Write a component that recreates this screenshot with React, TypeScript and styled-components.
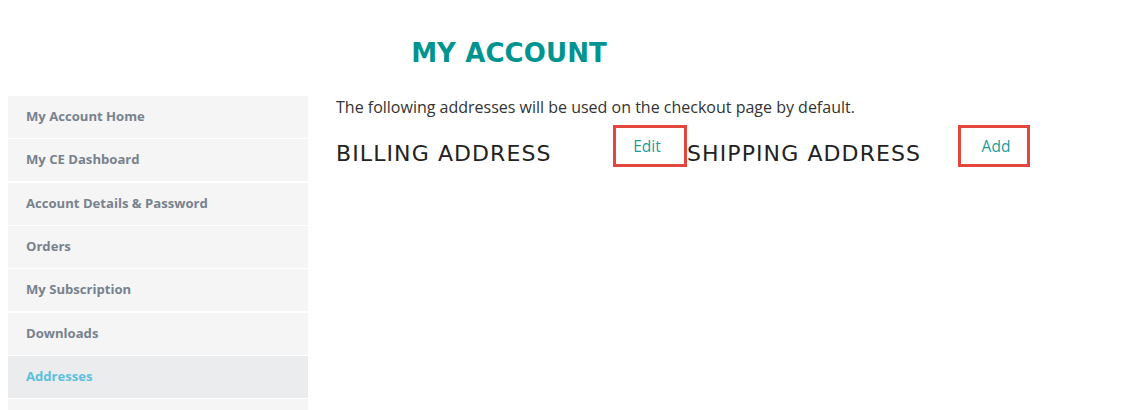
import React from "react";
import styled, { createGlobalStyle } from "styled-components";

const GlobalStyle = createGlobalStyle`
  html, body { margin: 0; padding: 0; background: #fff; }
  body { font-family: "Open Sans", "Liberation Sans", sans-serif; }
  * { box-sizing: border-box; }
`;

const Page = styled.div`
  padding: 0 8px;
  width: 1132px;
  height: 410px;
  overflow: hidden;
`;

const Title = styled.h1`
  margin: 0;
  width: 1002px;
  padding-top: 35px;
  height: 96px;
  text-align: center;
  font-family: "DejaVu Sans", "Liberation Sans", sans-serif;
  font-weight: 600;
  font-size: 26px;
  line-height: 36px;
  color: #009490;
  letter-spacing: 0.1px;
`;

const Layout = styled.div`
  display: flex;
  gap: 28px;
  align-items: flex-start;
`;

const Sidebar = styled.nav`
  width: 300px;
  display: flex;
  flex-direction: column;
  gap: 1.33px;
`;

const NavItem = styled.a<{ $active?: boolean }>`
  display: flex;
  align-items: center;
  height: 42px;
  padding-left: 18px;
  padding-bottom: 2px;
  background: ${(p) => (p.$active ? "#ebecee" : "#f5f5f5")};
  color: ${(p) => (p.$active ? "#5bc0de" : "#77828e")};
  font-family: "Open Sans", sans-serif;
  font-weight: 700;
  font-size: 13.1px;
  text-decoration: none;
`;

const Main = styled.div`
  flex: 1;
  display: flex;
  flex-direction: column;
`;

const Intro = styled.p`
  margin: 0;
  font-size: 16px;
  line-height: 22px;
  color: #333;
  height: 29px;
`;

const Columns = styled.div`
  display: flex;
`;

const Column = styled.div<{ $width: number }>`
  width: ${(p) => p.$width}px;
  display: flex;
  justify-content: space-between;
  align-items: flex-start;
`;

const Heading = styled.h3`
  margin: 0;
  margin-top: 15px;
  font-family: "DejaVu Sans", "Liberation Sans", sans-serif;
  font-weight: 400;
  font-size: 22px;
  line-height: 28px;
  color: #222;
  letter-spacing: 1.1px;
  white-space: nowrap;
`;

const ActionLink = styled.a<{ $width: number; $shift: number }>`
  display: flex;
  align-items: center;
  justify-content: center;
  flex-shrink: 0;
  width: ${(p) => p.$width}px;
  height: 42px;
  border: 3px solid #e2463f;
  color: #1a9c9b;
  font-size: 15.5px;
  padding-bottom: 1px;
  padding-left: ${(p) => (p.$shift > 0 ? p.$shift * 2 : 0)}px;
  padding-right: ${(p) => (p.$shift < 0 ? -p.$shift * 2 : 0)}px;
  text-decoration: none;
`;

const items = [
  "My Account Home",
  "My CE Dashboard",
  "Account Details & Password",
  "Orders",
  "My Subscription",
  "Downloads",
  "Addresses",
  "",
];

export default function App() {
  return (
    <>
      <GlobalStyle />
      <Page>
        <Title>MY ACCOUNT</Title>
        <Layout>
          <Sidebar>
            {items.map((label, i) => (
              <NavItem key={i} $active={label === "Addresses"}>
                {label}
              </NavItem>
            ))}
          </Sidebar>
          <Main>
            <Intro>The following addresses will be used on the checkout page by default.</Intro>
            <Columns>
              <Column $width={351}>
                <Heading>BILLING ADDRESS</Heading>
                <ActionLink $width={74} $shift={-3}>Edit</ActionLink>
              </Column>
              <Column $width={343}>
                <Heading>SHIPPING ADDRESS</Heading>
                <ActionLink $width={72} $shift={2}>Add</ActionLink>
              </Column>
            </Columns>
          </Main>
        </Layout>
      </Page>
    </>
  );
}
